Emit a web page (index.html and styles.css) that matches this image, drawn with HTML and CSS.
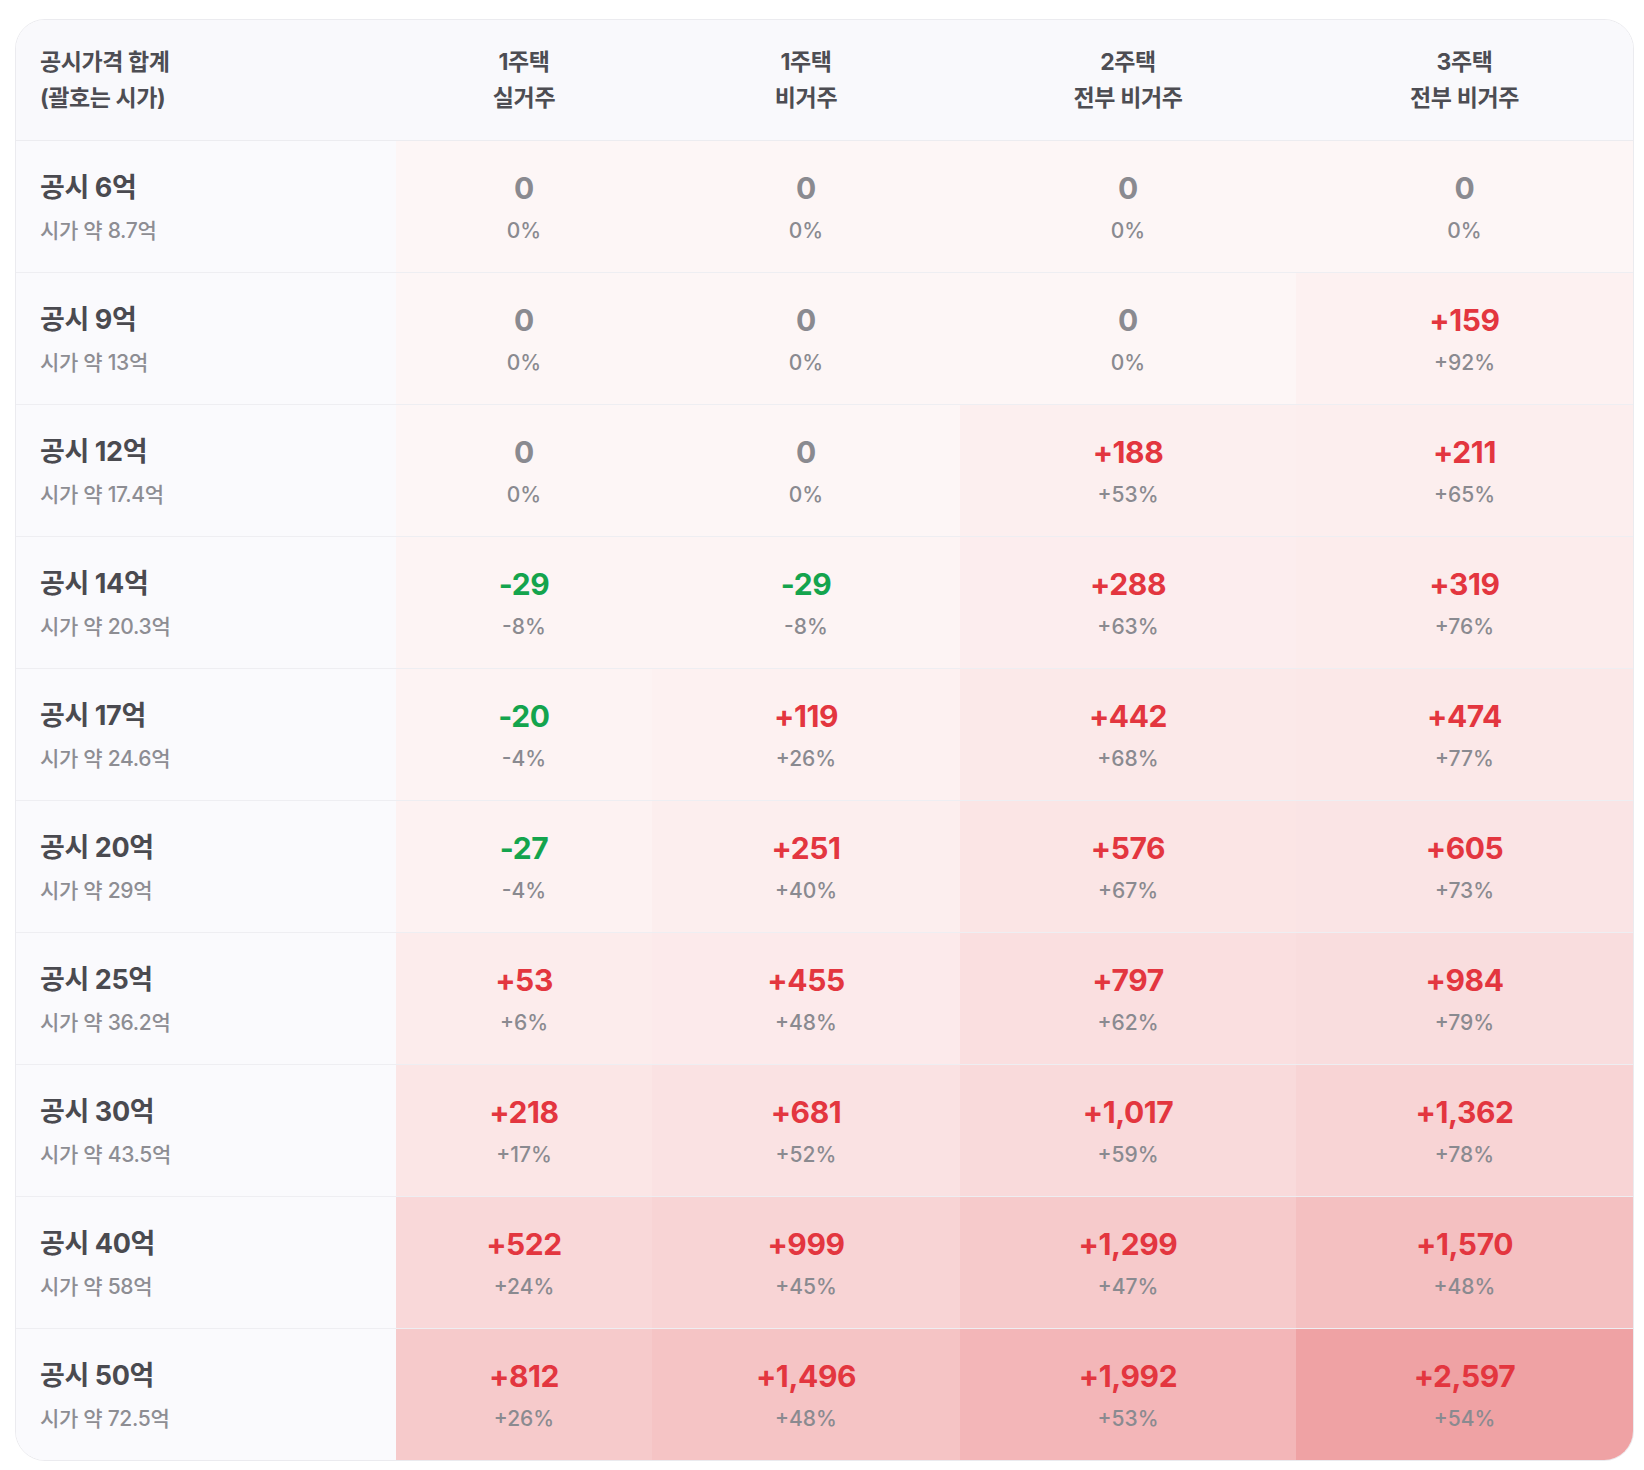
FILE: index.html
```html
<!DOCTYPE html>
<html lang="ko">
<head>
<meta charset="utf-8">
<title>공시가격별 보유세 변화</title>
<link rel="stylesheet" href="styles.css">
</head>
<body>
<div class="card">
<table class="grid">
<colgroup>
<col class="c-label"><col class="c-1"><col class="c-2"><col class="c-3"><col class="c-4">
</colgroup>
<thead>
<tr>
<th class="h-label">공시가격 합계<br>(괄호는 시가)</th>
<th>1주택<br>실거주</th>
<th>1주택<br>비거주</th>
<th>2주택<br>전부 비거주</th>
<th>3주택<br>전부 비거주</th>
</tr>
</thead>
<tbody>
<tr>
<td class="label"><div class="t">공시 6억</div><div class="s">시가 약 8.7억</div></td>
<td style="--a:.046"><div class="v zero">0</div><div class="p">0%</div></td>
<td style="--a:.046"><div class="v zero">0</div><div class="p">0%</div></td>
<td style="--a:.046"><div class="v zero">0</div><div class="p">0%</div></td>
<td style="--a:.046"><div class="v zero">0</div><div class="p">0%</div></td>
</tr>
<tr>
<td class="label"><div class="t">공시 9억</div><div class="s">시가 약 13억</div></td>
<td style="--a:.046"><div class="v zero">0</div><div class="p">0%</div></td>
<td style="--a:.046"><div class="v zero">0</div><div class="p">0%</div></td>
<td style="--a:.046"><div class="v zero">0</div><div class="p">0%</div></td>
<td style="--a:.072"><div class="v up">+159</div><div class="p">+92%</div></td>
</tr>
<tr>
<td class="label"><div class="t">공시 12억</div><div class="s">시가 약 17.4억</div></td>
<td style="--a:.046"><div class="v zero">0</div><div class="p">0%</div></td>
<td style="--a:.046"><div class="v zero">0</div><div class="p">0%</div></td>
<td style="--a:.082"><div class="v up">+188</div><div class="p">+53%</div></td>
<td style="--a:.087"><div class="v up">+211</div><div class="p">+65%</div></td>
</tr>
<tr>
<td class="label"><div class="t">공시 14억</div><div class="s">시가 약 20.3억</div></td>
<td style="--a:.056"><div class="v down">-29</div><div class="p">-8%</div></td>
<td style="--a:.056"><div class="v down">-29</div><div class="p">-8%</div></td>
<td style="--a:.092"><div class="v up">+288</div><div class="p">+63%</div></td>
<td style="--a:.097"><div class="v up">+319</div><div class="p">+76%</div></td>
</tr>
<tr>
<td class="label"><div class="t">공시 17억</div><div class="s">시가 약 24.6억</div></td>
<td style="--a:.062"><div class="v down">-20</div><div class="p">-4%</div></td>
<td style="--a:.072"><div class="v up">+119</div><div class="p">+26%</div></td>
<td style="--a:.113"><div class="v up">+442</div><div class="p">+68%</div></td>
<td style="--a:.118"><div class="v up">+474</div><div class="p">+77%</div></td>
</tr>
<tr>
<td class="label"><div class="t">공시 20억</div><div class="s">시가 약 29억</div></td>
<td style="--a:.067"><div class="v down">-27</div><div class="p">-4%</div></td>
<td style="--a:.087"><div class="v up">+251</div><div class="p">+40%</div></td>
<td style="--a:.133"><div class="v up">+576</div><div class="p">+67%</div></td>
<td style="--a:.138"><div class="v up">+605</div><div class="p">+73%</div></td>
</tr>
<tr>
<td class="label"><div class="t">공시 25억</div><div class="s">시가 약 36.2억</div></td>
<td style="--a:.097"><div class="v up">+53</div><div class="p">+6%</div></td>
<td style="--a:.105"><div class="v up">+455</div><div class="p">+48%</div></td>
<td style="--a:.159"><div class="v up">+797</div><div class="p">+62%</div></td>
<td style="--a:.174"><div class="v up">+984</div><div class="p">+79%</div></td>
</tr>
<tr>
<td class="label"><div class="t">공시 30억</div><div class="s">시가 약 43.5억</div></td>
<td style="--a:.128"><div class="v up">+218</div><div class="p">+17%</div></td>
<td style="--a:.144"><div class="v up">+681</div><div class="p">+52%</div></td>
<td style="--a:.19"><div class="v up">+1,017</div><div class="p">+59%</div></td>
<td style="--a:.22"><div class="v up">+1,362</div><div class="p">+78%</div></td>
</tr>
<tr>
<td class="label"><div class="t">공시 40억</div><div class="s">시가 약 58억</div></td>
<td style="--a:.195"><div class="v up">+522</div><div class="p">+24%</div></td>
<td style="--a:.22"><div class="v up">+999</div><div class="p">+45%</div></td>
<td style="--a:.27"><div class="v up">+1,299</div><div class="p">+47%</div></td>
<td style="--a:.32"><div class="v up">+1,570</div><div class="p">+48%</div></td>
</tr>
<tr>
<td class="label"><div class="t">공시 50억</div><div class="s">시가 약 72.5억</div></td>
<td style="--a:.27"><div class="v up">+812</div><div class="p">+26%</div></td>
<td style="--a:.30"><div class="v up">+1,496</div><div class="p">+48%</div></td>
<td style="--a:.37"><div class="v up">+1,992</div><div class="p">+53%</div></td>
<td style="--a:.47"><div class="v up">+2,597</div><div class="p">+54%</div></td>
</tr>
</tbody>
</table>
</div>
</body>
</html>
```

FILE: styles.css
```css
* { box-sizing: border-box; }

html, body {
  margin: 0;
  padding: 0;
  background: #ffffff;
}

body {
  font-family: "Inter", "Noto Sans CJK KR", sans-serif;
  padding: 19px 10px 0 15px;
}

.card {
  width: 1619px;
  border: 1px solid #ebebef;
  border-radius: 30px;
  overflow: hidden;
  background: #ffffff;
}

.grid {
  width: 1617px;
  border-collapse: collapse;
  table-layout: fixed;
}

.c-label { width: 380px; }
.c-1 { width: 256px; }
.c-2 { width: 308px; }
.c-3 { width: 336px; }
.c-4 { width: 337px; }

thead th {
  height: 120px;
  background: #f9f9fc;
  border-bottom: 1px solid #ececf0;
  font-size: 23px;
  line-height: 36px;
  font-weight: 700;
  color: #4d4d53;
  text-align: center;
  vertical-align: middle;
  letter-spacing: -0.4px;
  padding: 1px 0 0 0;
}

thead th.h-label {
  text-align: left;
  padding-left: 24px;
}

tbody tr + tr td {
  border-top: 1px solid #eeeef2;
}

tbody td {
  height: 131px;
  padding: 28px 0 26px 0;
  text-align: center;
  vertical-align: top;
  background: rgba(222, 58, 62, var(--a, 0));
}

tbody td.label {
  text-align: left;
  padding-left: 24px;
  background: #fafafd;
}

.t {
  font-size: 27px;
  line-height: 38px;
  font-weight: 700;
  color: #4a4a50;
  letter-spacing: -0.4px;
}

.s {
  margin-top: 9px;
  font-size: 21px;
  line-height: 30px;
  font-weight: 500;
  color: #8d8d93;
  letter-spacing: -0.3px;
}

.v {
  font-size: 30px;
  line-height: 38px;
  font-weight: 700;
  letter-spacing: -0.4px;
}

.v.zero { color: #8a8a90; }
.v.up { color: #e3363f; }
.v.down { color: #14a44d; }

.p {
  margin-top: 9px;
  font-size: 21px;
  line-height: 30px;
  font-weight: 500;
  color: #8a8a90;
}
```
